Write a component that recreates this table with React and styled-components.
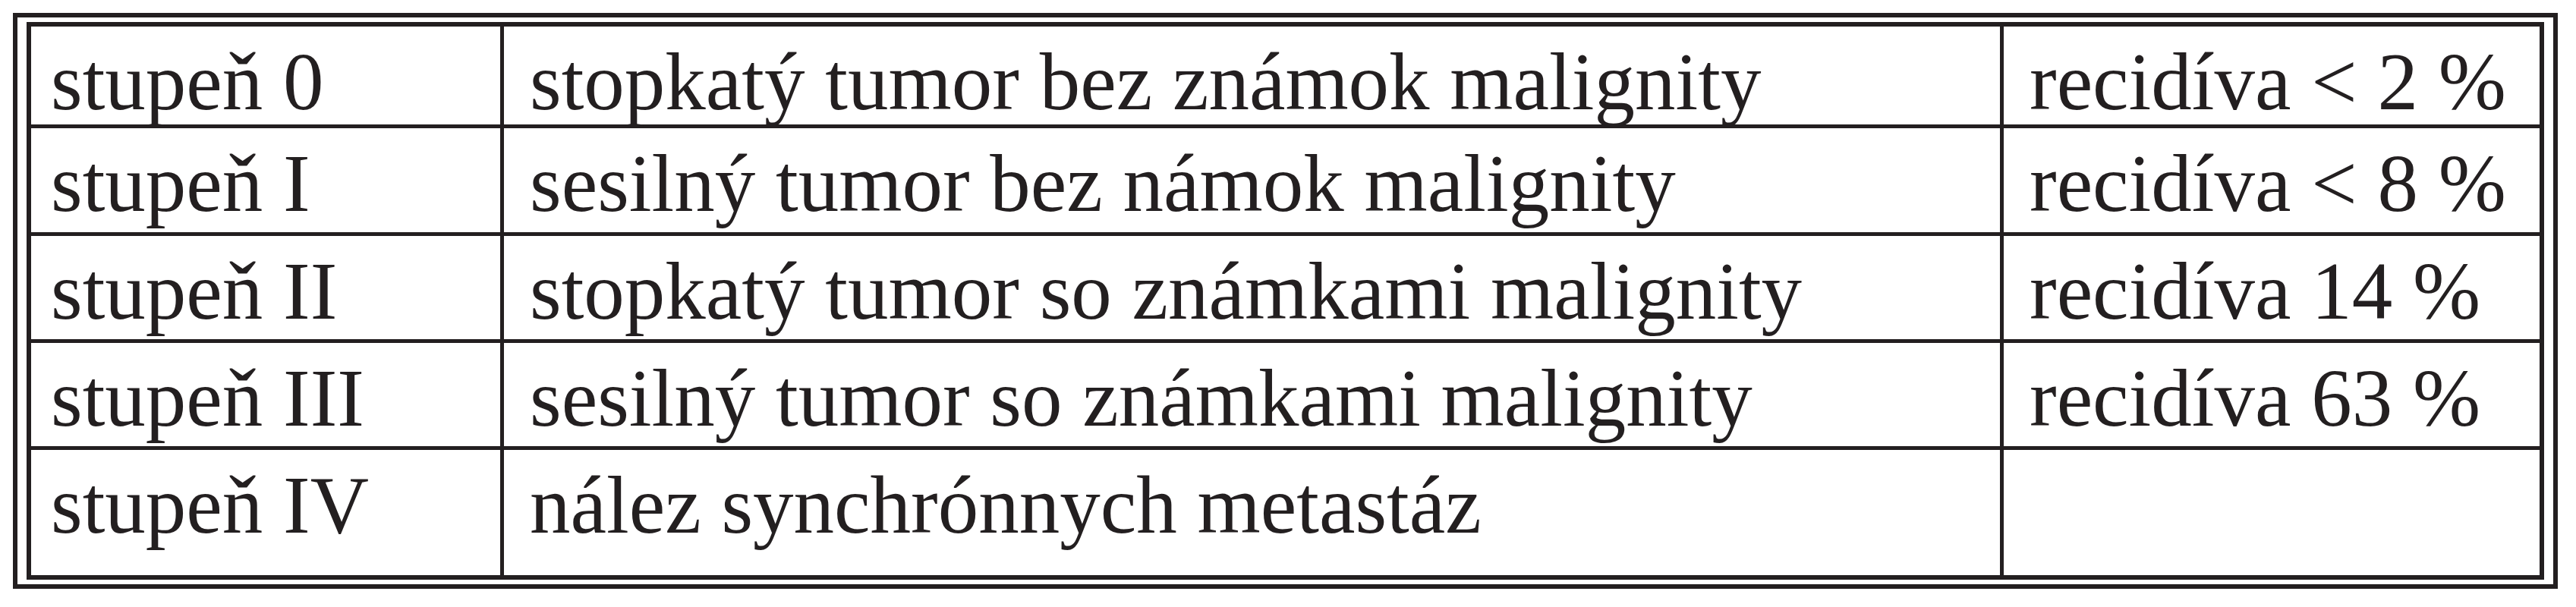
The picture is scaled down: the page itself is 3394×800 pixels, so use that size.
import React from "react";
import styled, { createGlobalStyle } from "styled-components";

// Constants:
const INK = "#231f20";

const ROWS = [
  ["stupeň 0", "stopkatý tumor bez známok malignity", "recidíva < 2 %"],
  ["stupeň I", "sesilný tumor bez námok malignity", "recidíva < 8 %"],
  ["stupeň II", "stopkatý tumor so známkami malignity", "recidíva 14 %"],
  ["stupeň III", "sesilný tumor so známkami malignity", "recidíva 63 %"],
  ["stupeň IV", "nález synchrónnych metastáz", ""]
];

// Functions:
const App = () => {
  return (
    <>
      <GlobalStyle />
      <Page>
        <Frame>
          <Table>
            {ROWS.map((row, r) =>
              row.map((text, c) => (
                <Cell key={`${r}-${c}`} $pad={c === 0 ? 26 : 34}>
                  {text}
                </Cell>
              ))
            )}
          </Table>
        </Frame>
      </Page>
    </>
  );
};

// Exports:
export default App;

// Styles:
const GlobalStyle = createGlobalStyle`
  html, body {
    margin: 0;
    padding: 0;
    background: #ffffff;
  }
  body {
    font-family: "Liberation Serif", "Times New Roman", serif;
  }
`;

const Page = styled.div`
  width: 3394px;
  height: 800px;
  box-sizing: border-box;
  padding: 17px 24px 24px 17px;
  background: #ffffff;
`;

const Frame = styled.div`
  box-sizing: border-box;
  width: 3353px;
  height: 759px;
  border: 6px solid ${INK};
  padding: 6px 12px 6px 12px;
`;

const Table = styled.div`
  box-sizing: border-box;
  height: 100%;
  display: grid;
  grid-template-columns: 618px 1971px 1fr;
  grid-template-rows: 129px 137px 136px 136px 1fr;
  gap: 5px;
  border: 6px solid ${INK};
  background: ${INK};
`;

const Cell = styled.div`
  background: #ffffff;
  color: ${INK};
  font-family: "Liberation Serif", "Times New Roman", serif;
  font-size: 107px;
  line-height: 118px;
  padding: 14px 0 0 ${(p) => p.$pad}px;
  white-space: nowrap;
`;
